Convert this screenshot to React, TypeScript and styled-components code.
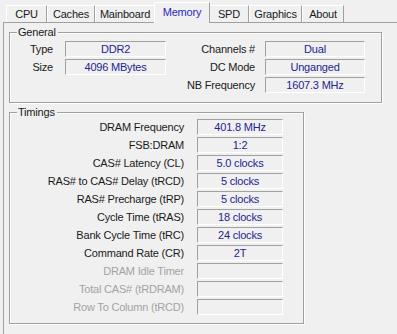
import styled, { createGlobalStyle } from "styled-components";

const GlobalStyle = createGlobalStyle`
  html, body {
    margin: 0;
    padding: 0;
    background: #f0f0f0;
  }
  body {
    font-family: "Liberation Sans", Arial, sans-serif;
    font-size: 11px;
    letter-spacing: -0.2px;
    color: #1a1a1a;
  }
`;

interface TabProps {
  $w: number;
  $active?: boolean;
}

interface LabelProps {
  $disabled?: boolean;
}

const Window = styled.div`
  width: 397px;
  height: 334px;
  overflow: hidden;
  display: flex;
  flex-direction: column;
  background: #f0f0f0;
`;

const TabBar = styled.div`
  height: 22px;
  padding-left: 6px;
  display: flex;
  align-items: flex-end;
  position: relative;
  z-index: 1;
`;

const Tab = styled.div<TabProps>`
  box-sizing: border-box;
  width: ${(p) => (p.$active ? p.$w + 2 : p.$w)}px;
  height: ${(p) => (p.$active ? 21 : 17)}px;
  margin: 0 ${(p) => (p.$active ? -1 : 0)}px ${(p) => (p.$active ? -1 : 0)}px;
  border-left: 1px solid #ffffff;
  border-top: 1px solid #ffffff;
  border-right: 1px solid #a0a0a0;
  background: #f0f0f0;
  display: flex;
  align-items: center;
  justify-content: center;
  padding-bottom: ${(p) => (p.$active ? 3 : 0)}px;
  color: ${(p) => (p.$active ? "#2828c8" : "#1a1a1a")};
  position: relative;
  z-index: ${(p) => (p.$active ? 2 : 0)};
`;

const Page = styled.div`
  flex: 1;
  margin-left: 3px;
  border-left: 1px solid #a0a0a0;
  border-top: 1px solid #a0a0a0;
  padding: 9px 0 0 5px;
  display: flex;
  flex-direction: column;
  gap: 9px;
`;

const Group = styled.div<{ $w: number; $h: number }>`
  position: relative;
  box-sizing: border-box;
  width: ${(p) => p.$w}px;
  height: ${(p) => p.$h}px;
  border: 1px solid #a0a0a0;
  box-shadow: 1px 1px 0 #ffffff, inset 1px 1px 0 #ffffff;
`;

const Caption = styled.span`
  position: absolute;
  top: -7px;
  left: 7px;
  padding: 0 2px 0 1px;
  line-height: 13px;
  background: #f0f0f0;
`;

const GeneralGrid = styled.div`
  display: grid;
  grid-template-columns: 55px 101px 99px 100px;
  grid-auto-rows: 16px;
  row-gap: 2px;
  padding-top: 8px;
`;

const TimingGrid = styled.div`
  display: grid;
  grid-template-columns: 187px 86px;
  grid-auto-rows: 16px;
  row-gap: 2px;
  padding-top: 6px;
`;

const Label = styled.div<LabelProps & { $pad: number }>`
  text-align: right;
  padding-right: ${(p) => p.$pad}px;
  line-height: 16px;
  white-space: nowrap;
  color: ${(p) => (p.$disabled ? "#a3a3a3" : "#1a1a1a")};
`;

const Value = styled.div`
  box-sizing: border-box;
  height: 16px;
  border-top: 1px solid #a0a0a0;
  border-left: 1px solid #a0a0a0;
  border-right: 1px solid #ffffff;
  border-bottom: 1px solid #ffffff;
  text-align: center;
  line-height: 14px;
  color: #242490;
  white-space: nowrap;
`;

const tabs = [
  { name: "CPU", w: 41 },
  { name: "Caches", w: 48 },
  { name: "Mainboard", w: 60 },
  { name: "Memory", w: 54, active: true },
  { name: "SPD", w: 40 },
  { name: "Graphics", w: 53 },
  { name: "About", w: 42 },
];

const timings: { label: string; value: string; disabled?: boolean }[] = [
  { label: "DRAM Frequency", value: "401.8 MHz" },
  { label: "FSB:DRAM", value: "1:2" },
  { label: "CAS# Latency (CL)", value: "5.0 clocks" },
  { label: "RAS# to CAS# Delay (tRCD)", value: "5 clocks" },
  { label: "RAS# Precharge (tRP)", value: "5 clocks" },
  { label: "Cycle Time (tRAS)", value: "18 clocks" },
  { label: "Bank Cycle Time (tRC)", value: "24 clocks" },
  { label: "Command Rate (CR)", value: "2T" },
  { label: "DRAM Idle Timer", value: "", disabled: true },
  { label: "Total CAS# (tRDRAM)", value: "", disabled: true },
  { label: "Row To Column (tRCD)", value: "", disabled: true },
];

const App = () => {
  return (
    <>
      <GlobalStyle />
      <Window>
        <TabBar>
          {tabs.map((t) => (
            <Tab key={t.name} $w={t.w} $active={t.active}>
              {t.name}
            </Tab>
          ))}
        </TabBar>
        <Page>
          <Group $w={373} $h={71}>
            <Caption>General</Caption>
            <GeneralGrid>
              <Label $pad={12}>Type</Label>
              <Value>DDR2</Value>
              <Label $pad={10}>Channels #</Label>
              <Value>Dual</Value>

              <Label $pad={12}>Size</Label>
              <Value>4096 MBytes</Value>
              <Label $pad={10}>DC Mode</Label>
              <Value>Unganged</Value>

              <div />
              <div />
              <Label $pad={10}>NB Frequency</Label>
              <Value>1607.3 MHz</Value>
            </GeneralGrid>
          </Group>
          <Group $w={295} $h={212}>
            <Caption>Timings</Caption>
            <TimingGrid>
              {timings.map((t) => (
                <>
                  <Label key={t.label} $pad={13} $disabled={t.disabled}>
                    {t.label}
                  </Label>
                  <Value key={t.label + "v"}>{t.value}</Value>
                </>
              ))}
            </TimingGrid>
          </Group>
        </Page>
      </Window>
    </>
  );
};

export default App;
